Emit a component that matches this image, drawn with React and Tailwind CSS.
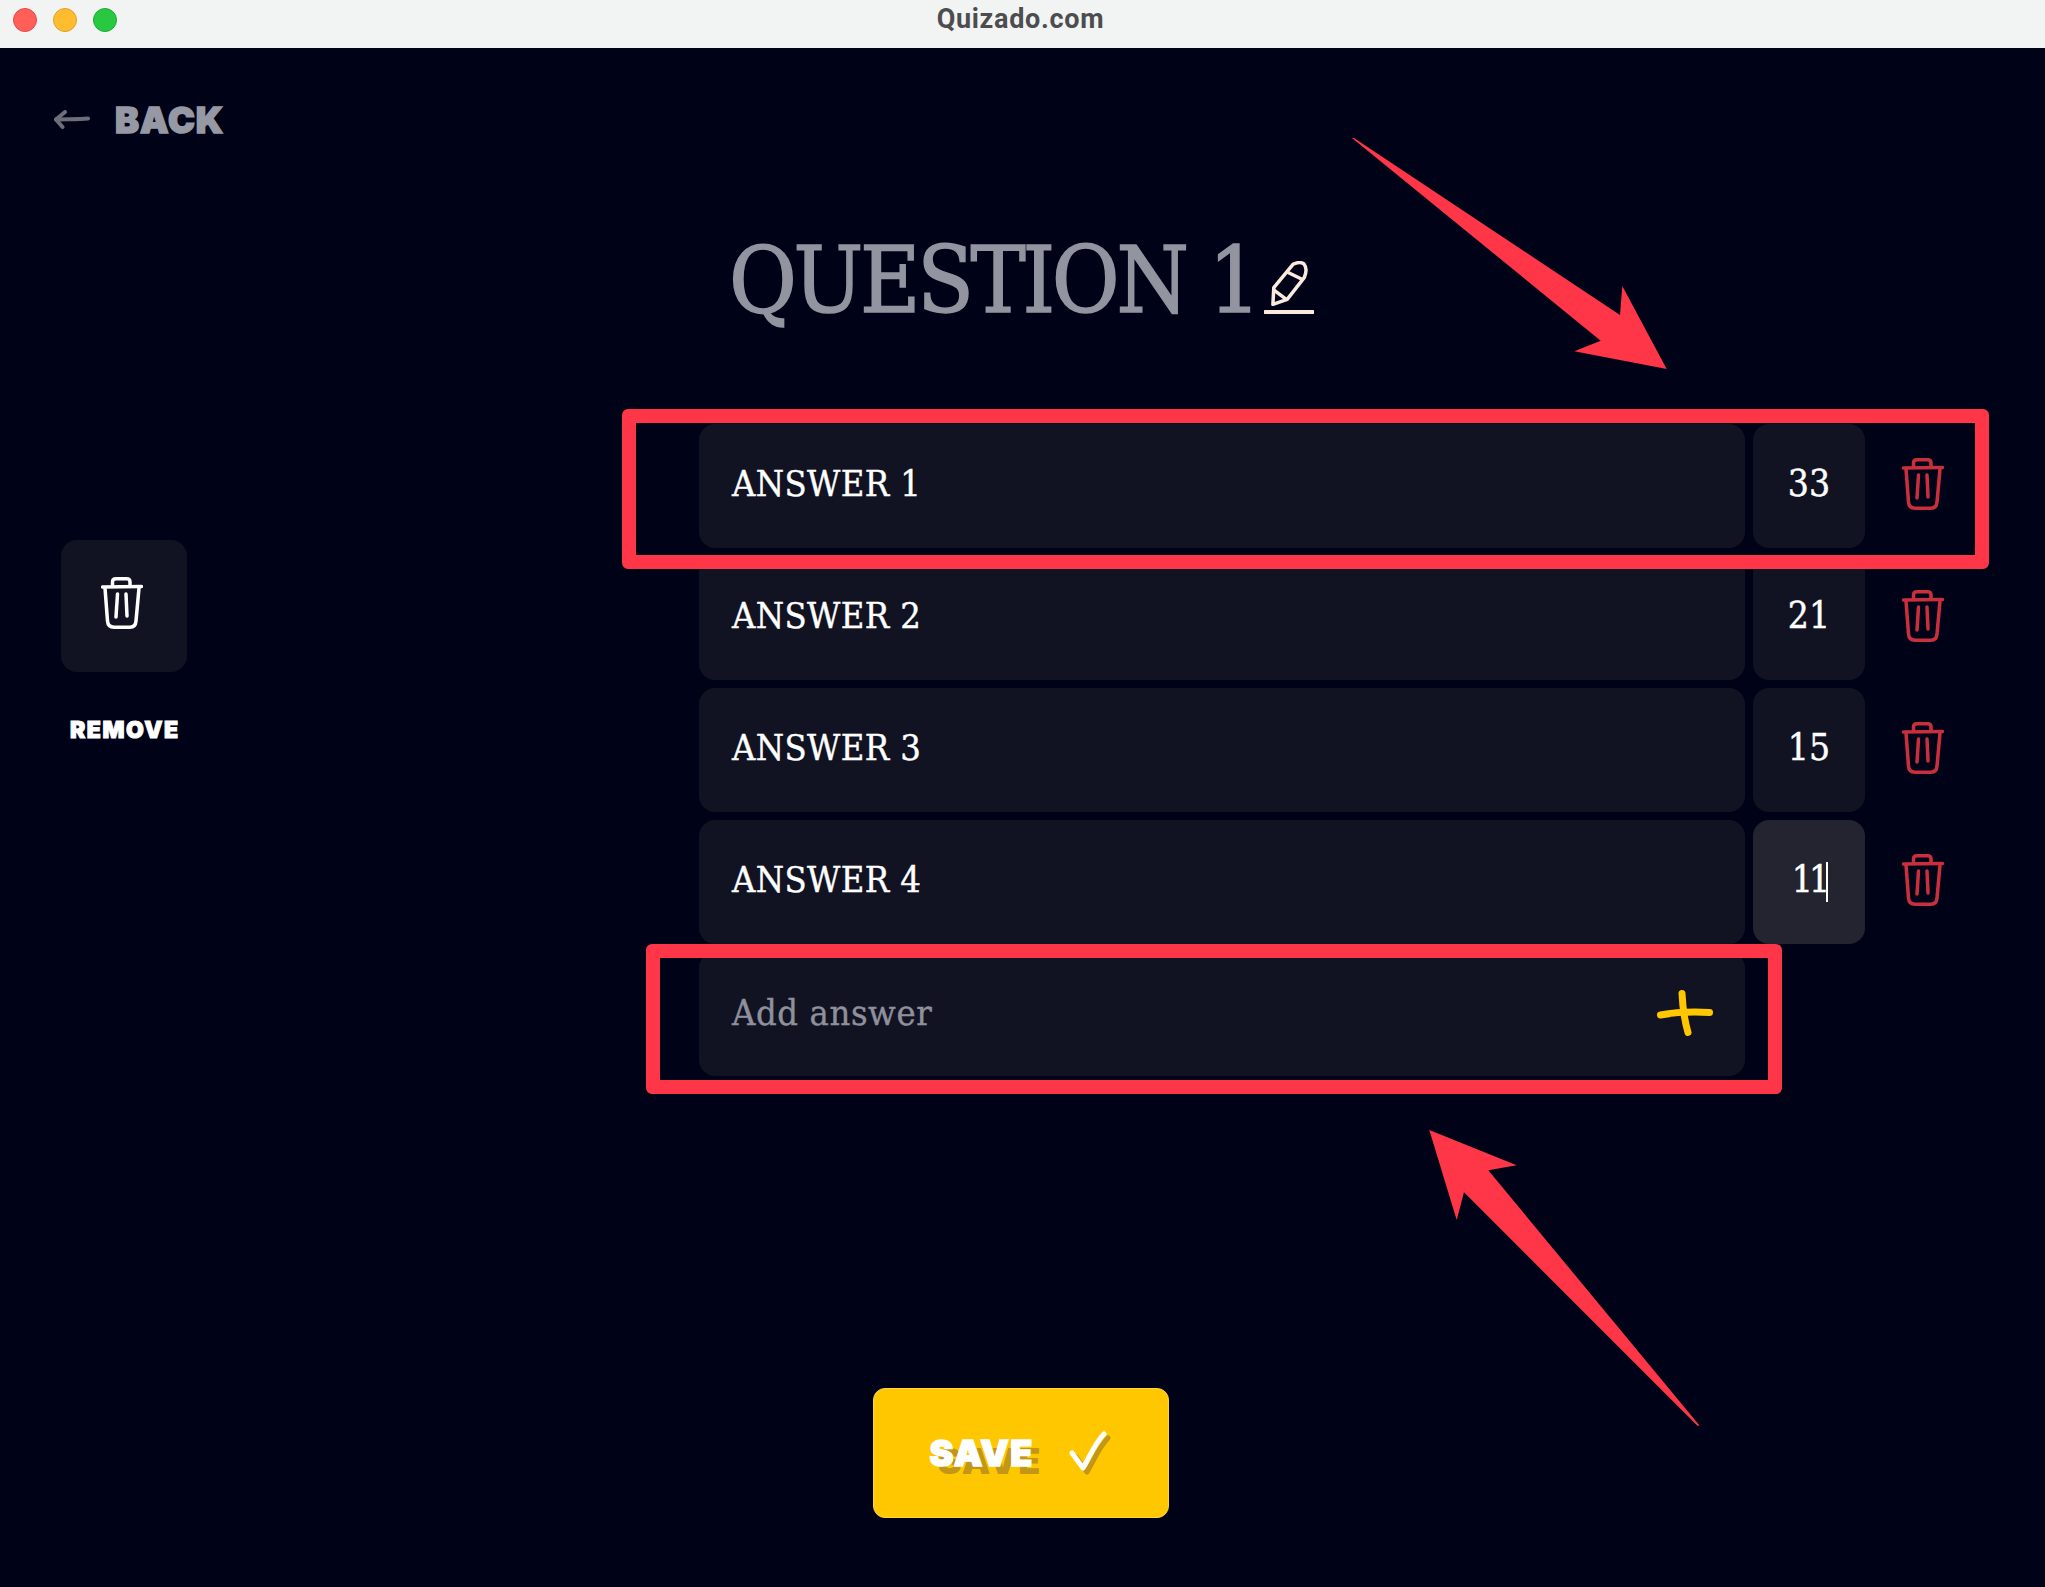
import { useState } from "react";

const slab = "font-['DejaVu_Serif_Condensed','DejaVu_Serif',serif]";
const heavy = "font-['Inter','Liberation_Sans',sans-serif] font-black";

const answers = [
  { label: "ANSWER 1", points: "33" },
  { label: "ANSWER 2", points: "21" },
  { label: "ANSWER 3", points: "15" },
  { label: "ANSWER 4", points: "11", focused: true },
];

function TrashIcon({ className }) {
  return (
    <svg viewBox="0 0 42 52" fill="none" stroke="currentColor" strokeWidth="3.5" strokeLinecap="round" strokeLinejoin="round" className={className}>
      <path d="M1.5 10 L40.5 9.5" />
      <path d="M11.5 9 V5 Q11.5 1.8 15 1.8 H25.5 Q29 1.8 29 5 V9" />
      <path d="M4 11 L6.5 44 Q7 50.2 13 50.2 H29 Q34.5 50.2 35 44 L38 11" />
      <path d="M16.5 17 L15 40" />
      <path d="M25 17 L26 39" />
    </svg>
  );
}

function AnswerRow({ label, points, focused }) {
  return (
    <div className="flex items-center gap-2">
      <div className="flex h-[124px] w-[1046px] items-center rounded-2xl bg-[#111322] pb-1 pl-[33px] text-[36px] tracking-[0.4px] text-white [-webkit-text-stroke:0.4px_white]">{label}</div>
      <div className={`flex h-[124px] w-[112px] items-center justify-center rounded-2xl pb-1 text-[37px] text-white [-webkit-text-stroke:0.4px_white] ${focused ? "bg-[#232430]" : "bg-[#111322]"}`}>
        <span className={`relative ${focused ? "tracking-[-4px]" : "tracking-normal"}`}>
          {points}
          {focused && <span className="absolute left-full top-[10px] h-10 w-0.5 bg-white" />}
        </span>
      </div>
      <TrashIcon className="mb-1 ml-[29px] h-[52px] w-[42px] text-[#c92f3d]" />
    </div>
  );
}

export default function App() {
  const [name] = useState("QUESTION 1");

  return (
    <div className="relative h-[1587px] w-[2045px] overflow-hidden bg-[#000218]">
      {/* window bar */}
      <div className="relative flex h-12 items-center justify-center bg-[#f2f4f4] pb-[10px]">
        <div className="absolute left-[13px] top-2 flex gap-4">
          <span className="h-6 w-6 rounded-full border border-[#e5484d] bg-[#ff5f57]" />
          <span className="h-6 w-6 rounded-full border border-[#e0a028] bg-[#febc2e]" />
          <span className="h-6 w-6 rounded-full border border-[#20a83a] bg-[#28c840]" />
        </div>
        <span className="mr-1 font-['Roboto',sans-serif] text-[27px] font-bold tracking-[0.7px] text-[#4d4d4f]">Quizado.com</span>
      </div>

      <div className="flex">
        {/* left column */}
        <aside className="w-[699px] shrink-0">
          <div className="flex items-center pl-[54px] pt-[54px]">
            <svg viewBox="0 0 36 20" fill="none" stroke="#6d6e7a" strokeWidth="4" strokeLinecap="round" strokeLinejoin="round" className="h-5 w-9">
              <path d="M2 9.5 C12 9 24 9.5 34 8.5" />
              <path d="M11 2 L2 9.5 L8.5 17" />
            </svg>
            <span className={`ml-[25px] text-[36px] leading-9 tracking-[1px] text-[#9698a3] [-webkit-text-stroke:1.5px_#9698a3] ${heavy}`}>BACK</span>
          </div>
          <div className="ml-[61px] mt-[402px] flex h-[132px] w-[126px] items-center justify-center rounded-2xl bg-[#111322] pb-[6px] pr-1">
            <TrashIcon className="h-[52px] w-[42px] text-white" />
          </div>
          <p className={`ml-[70px] mt-[46px] text-[23px] leading-6 tracking-[1.5px] text-white [-webkit-text-stroke:1px_white] ${heavy}`}>REMOVE</p>
        </aside>

        {/* question column */}
        <main className={slab}>
          <div className="flex h-[376px] items-start pl-[30px] pt-[178px]">
            <h1 className="text-[92px] leading-[110px] tracking-[-3.3px] text-[#9294a0] [-webkit-text-stroke:1.5px_#9294a0]">{name}</h1>
            <svg viewBox="0 0 50 54" fill="none" stroke="#fbeadf" strokeWidth="3.5" strokeLinecap="round" strokeLinejoin="round" className="ml-[6px] mt-[35px] h-[54px] w-[50px]">
              <path d="M8.9 43.3 L9.8 26.7 L29 3.3 Q35.7 0 40 3 Q44 8 40.2 16.7 L23.2 38.3 Z" />
              <path d="M10.3 29.3 L22.3 38.3" />
              <path d="M24.6 11.7 L38 18.3" />
              <path d="M1 51 H49" strokeWidth="4" />
            </svg>
          </div>
          <div className="flex flex-col gap-2">
            {answers.map((a) => (
              <AnswerRow key={a.label} {...a} />
            ))}
            <div className="relative flex h-[124px] w-[1046px] items-center rounded-2xl bg-[#111322] pb-0.5 pl-[33px] text-[36px] tracking-[0.6px] text-[#8f909c] [-webkit-text-stroke:0.4px_#8f909c]">
              Add answer
              <svg viewBox="0 0 56 46" fill="none" stroke="#ffc700" strokeWidth="7" strokeLinecap="round" className="absolute left-[958px] top-[38px] h-[46px] w-14">
                <path d="M3.5 25 Q25 21 52.5 22.5" />
                <path d="M25 3.5 Q26 25 31 42.5" />
              </svg>
            </div>
          </div>
        </main>
      </div>

      {/* save */}
      <div className="mt-[312px] flex justify-center">
        <button className="ml-[-4px] flex h-[130px] w-[296px] items-center rounded-xl border border-[#ffd23f] bg-[#ffc700] pl-[56px]">
          <span className={`text-[36px] leading-9 tracking-[1.2px] text-white [-webkit-text-stroke:1.5px_white] [text-shadow:8px_8px_0_#c29617] ${heavy}`}>SAVE</span>
          <svg viewBox="0 0 44 44" fill="none" strokeWidth="5" strokeLinecap="round" strokeLinejoin="round" className="ml-[36px] h-11 w-11">
            <path d="M7 26 L18 41 C24 31 30 16 39 7" stroke="#c29617" />
            <path d="M3 22 L14 37 C20 27 26 12 35 3" stroke="#ffffff" />
          </svg>
        </button>
      </div>

      {/* annotations */}
      <div className="absolute left-[622px] top-[409px] h-40 w-[1367px] rounded-md border-[14px] border-[#ff3548]" />
      <div className="absolute left-[646px] top-[944px] h-[150px] w-[1136px] rounded-md border-[14px] border-[#ff3548]" />
      <svg viewBox="0 0 2045 1587" className="pointer-events-none absolute inset-0 h-[1587px] w-[2045px]">
        <polygon fill="#ff3548" points="1352,138 1354,138 1620,315 1622.3,286 1666.7,369 1574.3,351.3 1600.7,340.7" />
        <polygon fill="#ff3548" points="1429.3,1130 1516.7,1165.3 1488.3,1170.3 1699.3,1425.3 1697.7,1426 1464,1192.3 1456.7,1220" />
      </svg>
    </div>
  );
}
